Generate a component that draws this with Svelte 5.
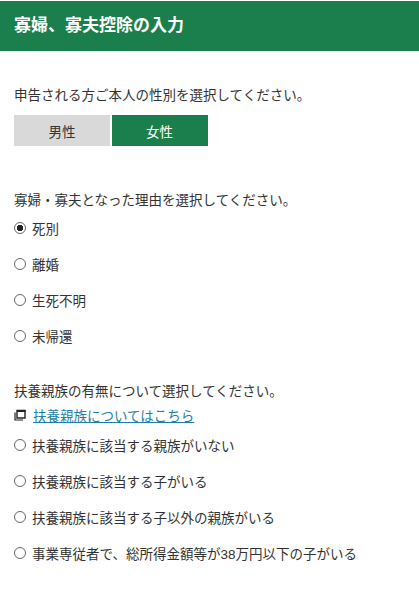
<script>
    let gender = '女性'
    let reason = '死別'
    let family = ''
    const reasons = ['死別', '離婚', '生死不明', '未帰還']
    const families = [
        '扶養親族に該当する親族がいない',
        '扶養親族に該当する子がいる',
        '扶養親族に該当する子以外の親族がいる',
        '事業専従者で、総所得金額等が38万円以下の子がいる'
    ]
</script>

<header>寡婦、寡夫控除の入力</header>

<main>
    <p class="first">申告される方ご本人の性別を選択してください。</p>
    <div class="toggle">
        {#each ['男性', '女性'] as g}
            <button class:on={gender == g} on:click={() => gender = g}>{g}</button>
        {/each}
    </div>

    <p class="second">寡婦・寡夫となった理由を選択してください。</p>
    <div class="radios reasons">
        {#each reasons as r}
            <label>
                <input type="radio" bind:group={reason} value={r} />
                <span class="mark"></span>
                {r}
            </label>
        {/each}
    </div>

    <p class="third">扶養親族の有無について選択してください。</p>
    <div class="link">
        <svg width="12" height="12" viewBox="0 0 12 12">
            <path d="M3 1.5h8v7.5h-8z" fill="none" stroke="#222" stroke-width="1.4" />
            <path d="M3 1h8.5v2h-8.5z" fill="#222" />
            <path d="M1 3.5v7.5h8" fill="none" stroke="#222" stroke-width="1.2" />
        </svg>
        <a href="#family">扶養親族についてはこちら</a>
    </div>
    <div class="radios">
        {#each families as f}
            <label>
                <input type="radio" bind:group={family} value={f} />
                <span class="mark"></span>
                {f}
            </label>
        {/each}
    </div>
</main>

<style>
    :global(body) {
        margin: 0;
        background: #fff;
        color: #333;
        font-family: "Liberation Sans", "Noto Sans CJK JP", sans-serif;
        font-size: 13.5px;
    }

    header {
        margin-top: 1px;
        height: 50px;
        line-height: 49px;
        padding-left: 14px;
        background: #1a7f4c;
        color: #fff;
        font-size: 17px;
        font-weight: bold;
    }

    main {
        padding: 0 14px;
    }

    p {
        margin: 0;
        line-height: 20px;
    }

    .first {
        padding-top: 35px;
    }

    .toggle {
        display: flex;
        gap: 1.5px;
        margin-top: 9px;
    }

    button {
        width: 96px;
        height: 31px;
        padding: 0;
        border: none;
        background: #d9d9d9;
        color: #333;
        font: inherit;
    }

    button.on {
        background: #1a7f4c;
        color: #fff;
    }

    .second {
        padding-top: 45px;
    }

    .radios {
        display: flex;
        flex-direction: column;
    }

    .reasons {
        margin-top: -1px;
    }

    label {
        display: flex;
        align-items: center;
        height: 36px;
        gap: 6px;
    }

    input {
        display: none;
    }

    .mark {
        box-sizing: border-box;
        width: 12px;
        height: 12px;
        border: 1px solid #666;
        border-radius: 50%;
    }

    input:checked + .mark {
        background: radial-gradient(circle, #222 0 3px, #fff 3.5px);
    }

    .third {
        padding-top: 28px;
    }

    .link {
        display: flex;
        align-items: center;
        gap: 7px;
        height: 24px;
        margin-top: 1px;
    }

    .link a {
        color: #1f7fa8;
    }
</style>
